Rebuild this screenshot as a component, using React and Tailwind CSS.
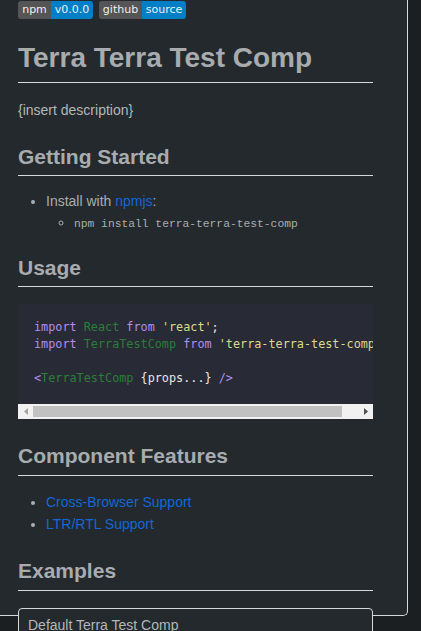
export default function App() {
  const sans = { fontFamily: '"Liberation Sans", Arial, sans-serif' };
  return (
    <div className="h-[631px] w-[421px] overflow-hidden bg-[#1b1f21]" style={sans}>
      <div className="relative h-[616px] w-[408px] rounded-br-[5px] border-r border-b border-[#d6d8d9] bg-[#23292d] pl-[18px]">
        <div className="w-[355px]">
          {/* badges */}
          <div className="flex gap-[6px] pt-[1px]" style={{ fontFamily: '"DejaVu Sans", Verdana, sans-serif' }}>
            <div className="flex h-[18px] overflow-hidden rounded-[3px] text-[11px] leading-[18px] text-[#f0f0f0]">
              <span className="w-[33px] bg-[#555555] text-center">npm</span>
              <span className="w-[42px] bg-[#007ec6] text-center">v0.0.0</span>
            </div>
            <div className="flex h-[18px] overflow-hidden rounded-[3px] text-[11px] leading-[18px] text-[#f0f0f0]">
              <span className="w-[43px] bg-[#555555] text-center">github</span>
              <span className="w-[44px] bg-[#007ec6] text-center">source</span>
            </div>
          </div>

          <h1 className="mt-[22px] border-b border-[#d6d8d9] pb-[7px] text-[28px] font-bold leading-[1.2] text-[#a8acaf]">
            Terra Terra Test Comp
          </h1>

          <p className="mt-[17px] text-[14px] leading-[21px] text-[#b3b7ba]">{'{insert description}'}</p>

          <h2 className="mt-[23px] border-b border-[#d6d8d9] pb-[6.5px] text-[21px] font-bold leading-[1.2] text-[#a8acaf]">
            Getting Started
          </h2>
          <ul className="mt-[15px] list-disc pl-[28px] text-[14px] leading-[21px] text-[#a9aeb1] marker:text-[#a9aeb1]">
            <li>
              Install with <span className="text-[#1467d6]">npmjs</span>:
              <ul className="list-[circle] pl-[28px]">
                <li>
                  <code className="text-[11.3px] text-[#a9adb0]" style={{ fontFamily: '"Liberation Mono", monospace' }}>
                    npm install terra-terra-test-comp
                  </code>
                </li>
              </ul>
            </li>
          </ul>

          <h2 className="mt-[19.5px] border-b border-[#d6d8d9] pb-[6.5px] text-[21px] font-bold leading-[1.2] text-[#a8acaf]">
            Usage
          </h2>
          <div className="mt-[17px] bg-[#282a36]">
            <pre
              className="overflow-hidden whitespace-pre pl-4 pt-[15px] pb-[17px] text-[11.8px] leading-[17px] text-[#e8e8e8]"
              style={{ fontFamily: '"DejaVu Sans Mono", monospace' }}
            >
              <div>
                <span className="text-[#b08ef0]">import</span> <span className="text-[#2a7f37]">React</span>{' '}
                <span className="text-[#b08ef0]">from</span> <span className="text-[#dcdb8c]">'react'</span>;
              </div>
              <div>
                <span className="text-[#b08ef0]">import</span> <span className="text-[#2a7f37]">TerraTestComp</span>{' '}
                <span className="text-[#b08ef0]">from</span>{' '}
                <span className="text-[#dcdb8c]">'terra-terra-test-comp'</span>;
              </div>
              <div>&nbsp;</div>
              <div>
                <span className="text-[#b08ef0]">&lt;</span>
                <span className="text-[#2a7f37]">TerraTestComp</span> {'{props...}'}{' '}
                <span className="text-[#b08ef0]">/&gt;</span>
              </div>
            </pre>
            {/* horizontal scrollbar */}
            <div className="flex h-[15px] bg-[#f1f1f1]">
              <div className="flex w-[15px] items-center justify-center">
                <svg width="4" height="7" viewBox="0 0 4 7">
                  <path d="M4 0 L0 3.5 L4 7 Z" fill="#a3a3a3" />
                </svg>
              </div>
              <div className="flex-1">
                <div className="mt-[2px] h-[11px] w-[309px] bg-[#c1c1c1]" />
              </div>
              <div className="flex w-[15px] items-center justify-center">
                <svg width="4" height="7" viewBox="0 0 4 7">
                  <path d="M0 0 L4 3.5 L0 7 Z" fill="#505050" />
                </svg>
              </div>
            </div>
          </div>

          <h2 className="mt-[23.5px] border-b border-[#d6d8d9] pb-[7px] text-[21px] font-bold leading-[1.2] text-[#a8acaf]">
            Component Features
          </h2>
          <ul className="mt-[16px] flex list-disc flex-col gap-[1px] pl-[28px] text-[14px] leading-[21px] text-[#a9aeb1]">
            <li>
              <span className="text-[#1467d6]">Cross-Browser Support</span>
            </li>
            <li>
              <span className="text-[#1467d6]">LTR/RTL Support</span>
            </li>
          </ul>

          <h2 className="mt-[23px] border-b border-[#d6d8d9] pb-[7px] text-[21px] font-bold leading-[1.2] text-[#a8acaf]">
            Examples
          </h2>
          <div className="relative mt-[17px] h-[40px] rounded-t-[4px] border border-[#d6d8d9] bg-[#23292d] px-[9px] pt-[6px] text-[14px] leading-[21px] text-[#b3b7ba]">
            Default Terra Test Comp
          </div>
        </div>
      </div>
    </div>
  );
}
